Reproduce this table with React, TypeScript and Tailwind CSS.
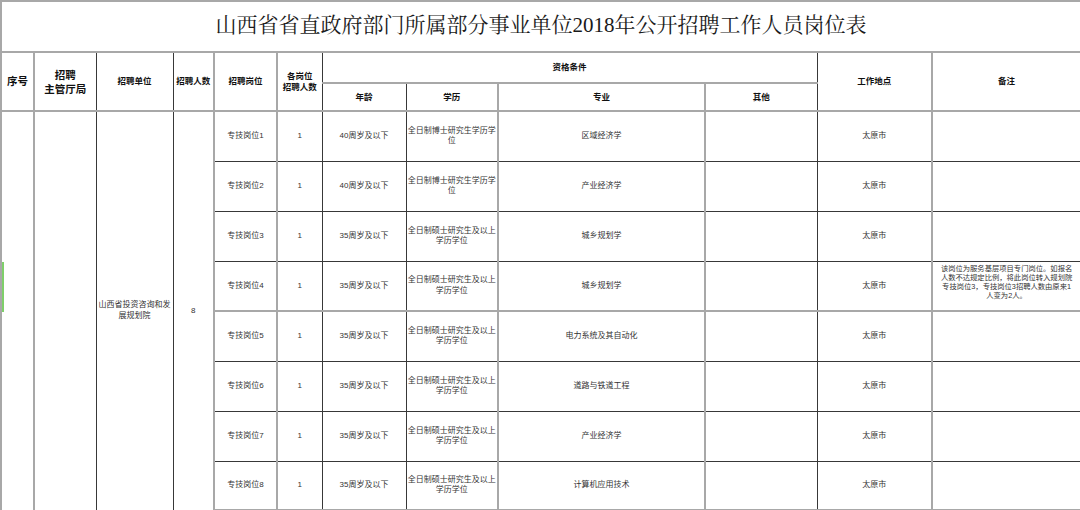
const rows = [
  { post: "专技岗位1", age: "40周岁及以下", edu: ["全日制博士研究生学历学", "位"], major: "区域经济学" },
  { post: "专技岗位2", age: "40周岁及以下", edu: ["全日制博士研究生学历学", "位"], major: "产业经济学" },
  { post: "专技岗位3", age: "35周岁及以下", edu: ["全日制硕士研究生及以上", "学历学位"], major: "城乡规划学" },
  { post: "专技岗位4", age: "35周岁及以下", edu: ["全日制硕士研究生及以上", "学历学位"], major: "城乡规划学" },
  { post: "专技岗位5", age: "35周岁及以下", edu: ["全日制硕士研究生及以上", "学历学位"], major: "电力系统及其自动化" },
  { post: "专技岗位6", age: "35周岁及以下", edu: ["全日制硕士研究生及以上", "学历学位"], major: "道路与铁道工程" },
  { post: "专技岗位7", age: "35周岁及以下", edu: ["全日制硕士研究生及以上", "学历学位"], major: "产业经济学" },
  { post: "专技岗位8", age: "35周岁及以下", edu: ["全日制硕士研究生及以上", "学历学位"], major: "计算机应用技术" },
]

const note = [
  "该岗位为服务基层项目专门岗位。如报名",
  "人数不达规定比例，将此岗位转入规划院",
  "专技岗位3，专技岗位3招聘人数由原来1",
  "人变为2人。",
]

const cell = "border border-[#383838] text-center align-middle p-0"
const gl = "border-l-2 border-l-[#a8a8a8]"
const head = "text-[8.5px] font-bold text-[#111] leading-[11px]"

export default function App() {
  return (
    <div className="w-[1080px] h-[510px] overflow-hidden bg-white font-['Liberation_Sans','Noto_Sans_CJK_SC',sans-serif] text-[#333]">
      <table className="w-[1080px] table-fixed border-collapse">
        <colgroup>
          <col className="w-[33px]" />
          <col className="w-[62px]" />
          <col className="w-[77px]" />
          <col className="w-[41px]" />
          <col className="w-[63px]" />
          <col className="w-[45px]" />
          <col className="w-[84px]" />
          <col className="w-[92px]" />
          <col className="w-[207px]" />
          <col className="w-[112px]" />
          <col className="w-[115px]" />
          <col className="w-[149px]" />
        </colgroup>
        <tbody>
          <tr className="h-[51px]">
            <td
              colSpan={12}
              className="border-2 border-[#a8a8a8] text-center align-middle p-0 pb-[1px] text-[21px] text-[#1a1a1a] font-['Liberation_Serif','Noto_Serif_CJK_SC','Noto_Sans_CJK_SC',serif]"
            >
              山西省省直政府部门所属部分事业单位2018年公开招聘工作人员岗位表
            </td>
          </tr>
          <tr className="h-[31px]">
            <td rowSpan={2} className={`${cell} ${gl} border-b-2 border-b-[#a8a8a8] text-[10.5px] font-bold text-[#111]`}>序号</td>
            <td rowSpan={2} className={`${cell} ${gl} border-b-2 border-b-[#a8a8a8] text-[10.5px] font-bold text-[#111] leading-[14px]`}>
              招聘
              <br />
              主管厅局
            </td>
            <td rowSpan={2} className={`${cell} border-b-2 border-b-[#a8a8a8] ${head}`}>招聘单位</td>
            <td rowSpan={2} className={`${cell} border-b-2 border-b-[#a8a8a8] ${head}`}>招聘人数</td>
            <td rowSpan={2} className={`${cell} ${gl} border-b-2 border-b-[#a8a8a8] ${head}`}>招聘岗位</td>
            <td rowSpan={2} className={`${cell} ${gl} border-b-2 border-b-[#a8a8a8] ${head}`}>
              各岗位
              <br />
              招聘人数
            </td>
            <td colSpan={4} className={`${cell} border-b-2 border-b-[#a8a8a8] ${head}`}>资格条件</td>
            <td rowSpan={2} className={`${cell} border-b-2 border-b-[#a8a8a8] ${head}`}>工作地点</td>
            <td rowSpan={2} className={`${cell} ${gl} border-r-2 border-r-[#a8a8a8] border-b-2 border-b-[#a8a8a8] ${head}`}>备注</td>
          </tr>
          <tr className="h-[28px]">
            <td className={`${cell} border-b-2 border-b-[#a8a8a8] ${head}`}>年龄</td>
            <td className={`${cell} border-b-2 border-b-[#a8a8a8] ${head}`}>学历</td>
            <td className={`${cell} ${gl} border-b-2 border-b-[#a8a8a8] ${head}`}>专业</td>
            <td className={`${cell} ${gl} border-b-2 border-b-[#a8a8a8] ${head}`}>其他</td>
          </tr>
          {rows.map((r, i) => (
            <tr key={r.post} className={i === 7 ? "h-[49px]" : "h-[50px]"}>
              {i === 0 && (
                <>
                  <td rowSpan={8} className={`${cell} ${gl} relative`}>
                    <div className="absolute left-0 top-[150px] h-[50px] w-[2px] bg-[#7fcf6a]" />
                  </td>
                  <td rowSpan={8} className={`${cell} ${gl}`} />
                  <td rowSpan={8} className={`${cell} text-[8px] leading-[10.5px] px-[2px]`}>
                    山西省投资咨询和发
                    <br />
                    展规划院
                  </td>
                  <td rowSpan={8} className={`${cell} text-[8px]`}>8</td>
                </>
              )}
              <td className={`${cell} ${gl} text-[8px] ${i === 4 ? "border-t-2 border-t-[#a8a8a8]" : ""} ${i === 7 ? "border-b-2 border-b-[#a8a8a8]" : ""}`}>
                {r.post}
              </td>
              <td className={`${cell} ${gl} text-[8px] ${i === 4 ? "border-t-2 border-t-[#a8a8a8]" : ""} ${i === 7 ? "border-b-2 border-b-[#a8a8a8]" : ""}`}>
                1
              </td>
              <td className={`${cell} text-[8px] ${i === 4 ? "border-t-2 border-t-[#a8a8a8]" : ""} ${i === 7 ? "border-b-2 border-b-[#a8a8a8]" : ""}`}>
                {r.age}
              </td>
              <td className={`${cell} text-[8px] leading-[10.5px] ${i === 4 ? "border-t-2 border-t-[#a8a8a8]" : ""} ${i === 7 ? "border-b-2 border-b-[#a8a8a8]" : ""}`}>
                {r.edu[0]}
                <br />
                {r.edu[1]}
              </td>
              <td className={`${cell} ${gl} text-[8px] ${i === 4 ? "border-t-2 border-t-[#a8a8a8]" : ""} ${i === 7 ? "border-b-2 border-b-[#a8a8a8]" : ""}`}>
                {r.major}
              </td>
              <td className={`${cell} ${gl} ${i === 4 ? "border-t-2 border-t-[#a8a8a8]" : ""} ${i === 7 ? "border-b-2 border-b-[#a8a8a8]" : ""}`} />
              <td className={`${cell} text-[8px] ${i === 4 ? "border-t-2 border-t-[#a8a8a8]" : ""} ${i === 7 ? "border-b-2 border-b-[#a8a8a8]" : ""}`}>
                太原市
              </td>
              <td
                className={`${cell} ${gl} border-r-2 border-r-[#a8a8a8] ${i === 3 ? "align-top pt-[2px]" : ""} ${i === 4 ? "border-t-2 border-t-[#a8a8a8]" : ""} ${i === 7 ? "border-b-2 border-b-[#a8a8a8]" : ""}`}
              >
                {i === 3 && (
                  <div className="text-[7.3px] leading-[9px] text-[#333] whitespace-nowrap">
                    {note.map((l) => (
                      <div key={l}>{l}</div>
                    ))}
                  </div>
                )}
              </td>
            </tr>
          ))}
        </tbody>
      </table>
    </div>
  )
}
